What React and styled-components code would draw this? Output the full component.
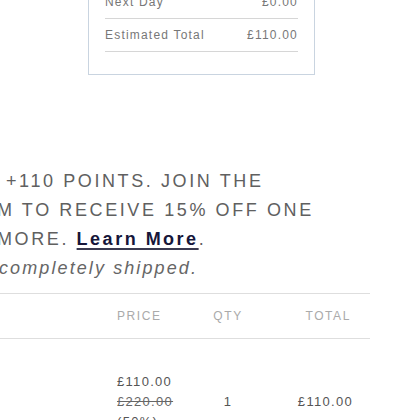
import React from 'react';
import styled, { createGlobalStyle } from 'styled-components';

const GlobalStyle = createGlobalStyle`
  html, body {
    margin: 0;
    padding: 0;
    background: #fff;
    overflow: hidden;
  }
  body {
    font-family: "Liberation Sans", Arial, sans-serif;
    width: 420px;
    height: 420px;
  }
`;

const Page = styled.div`
  display: flex;
  flex-direction: column;
  width: 420px;
`;

const SummaryCard = styled.div`
  box-sizing: border-box;
  width: 227px;
  margin: -14px 0 0 88px;
  padding: 0 16px 22px;
  border: 1px solid #c9d4e0;
  border-top: none;
`;

const SummaryRow = styled.div`
  display: flex;
  justify-content: space-between;
  padding: 9px 0;
  font-size: 12px;
  line-height: 14px;
  letter-spacing: 1.2px;
  color: #777;
  border-bottom: 1px solid #d6d6d6;
`;

const Points = styled.div`
  margin-top: 92px;
  font-size: 18px;
  line-height: 29px;
  letter-spacing: 2.6px;
  color: #606060;
  white-space: nowrap;
`;

const Line = styled.div`
  margin-left: ${p => p.$shift}px;
  font-style: ${p => (p.$italic ? 'italic' : 'normal')};
  letter-spacing: ${p => (p.$italic ? '2.1px' : 'inherit')};
  color: ${p => (p.$italic ? '#666' : 'inherit')};
`;

const LearnMore = styled.a`
  font-weight: bold;
  color: #16163a;
  text-decoration: underline;
  text-decoration-thickness: 2px;
  text-underline-offset: 3px;
  text-decoration-color: #3a3a50;
  letter-spacing: 2.5px;
`;

const Table = styled.div`
  margin-top: 10px;
  width: 370px;
`;

const HeaderRow = styled.div`
  display: grid;
  grid-template-columns: 117px 76px 70px 1fr;
  align-items: center;
  height: 44px;
  border-top: 1px solid #dedede;
  border-bottom: 1px solid #dedede;
`;

const HeadCell = styled.div`
  font-size: 12px;
  letter-spacing: 1.6px;
  color: #aaa;
  text-align: ${p => p.$align || 'left'};
  padding-right: ${p => (p.$align === 'right' ? '19px' : '0')};
`;

const ItemRow = styled.div`
  display: grid;
  grid-template-columns: 117px 76px 70px 1fr;
  align-items: center;
  padding-top: 33px;
`;

const Cell = styled.div`
  font-size: 13px;
  line-height: 20px;
  letter-spacing: 1.3px;
  color: #555;
  text-align: ${p => p.$align || 'left'};
  padding-right: ${p => (p.$align === 'right' ? '17px' : '0')};
`;

const Was = styled.div`
  text-decoration: line-through;
  color: #666;
`;

export default function App() {
  return (
    <>
      <GlobalStyle />
      <Page>
        <SummaryCard>
          <SummaryRow>
            <span>Next Day</span>
            <span>£0.00</span>
          </SummaryRow>
          <SummaryRow>
            <span>Estimated Total</span>
            <span>£110.00</span>
          </SummaryRow>
        </SummaryCard>

        <Points>
          <Line $shift={6}> +110 POINTS. JOIN THE</Line>
          <Line $shift={-3}>M TO RECEIVE 15% OFF ONE</Line>
          <Line $shift={-3}>
            MORE. <LearnMore href="#">Learn More</LearnMore>.
          </Line>
          <Line $shift={-1} $italic>completely shipped.</Line>
        </Points>

        <Table>
          <HeaderRow>
            <div />
            <HeadCell>PRICE</HeadCell>
            <HeadCell $align="center">QTY</HeadCell>
            <HeadCell $align="right">TOTAL</HeadCell>
          </HeaderRow>
          <ItemRow>
            <div />
            <Cell>
              <div>£110.00</div>
              <Was>£220.00</Was>
              <div>(50%)</div>
            </Cell>
            <Cell $align="center">1</Cell>
            <Cell $align="right">£110.00</Cell>
          </ItemRow>
        </Table>
      </Page>
    </>
  );
}
